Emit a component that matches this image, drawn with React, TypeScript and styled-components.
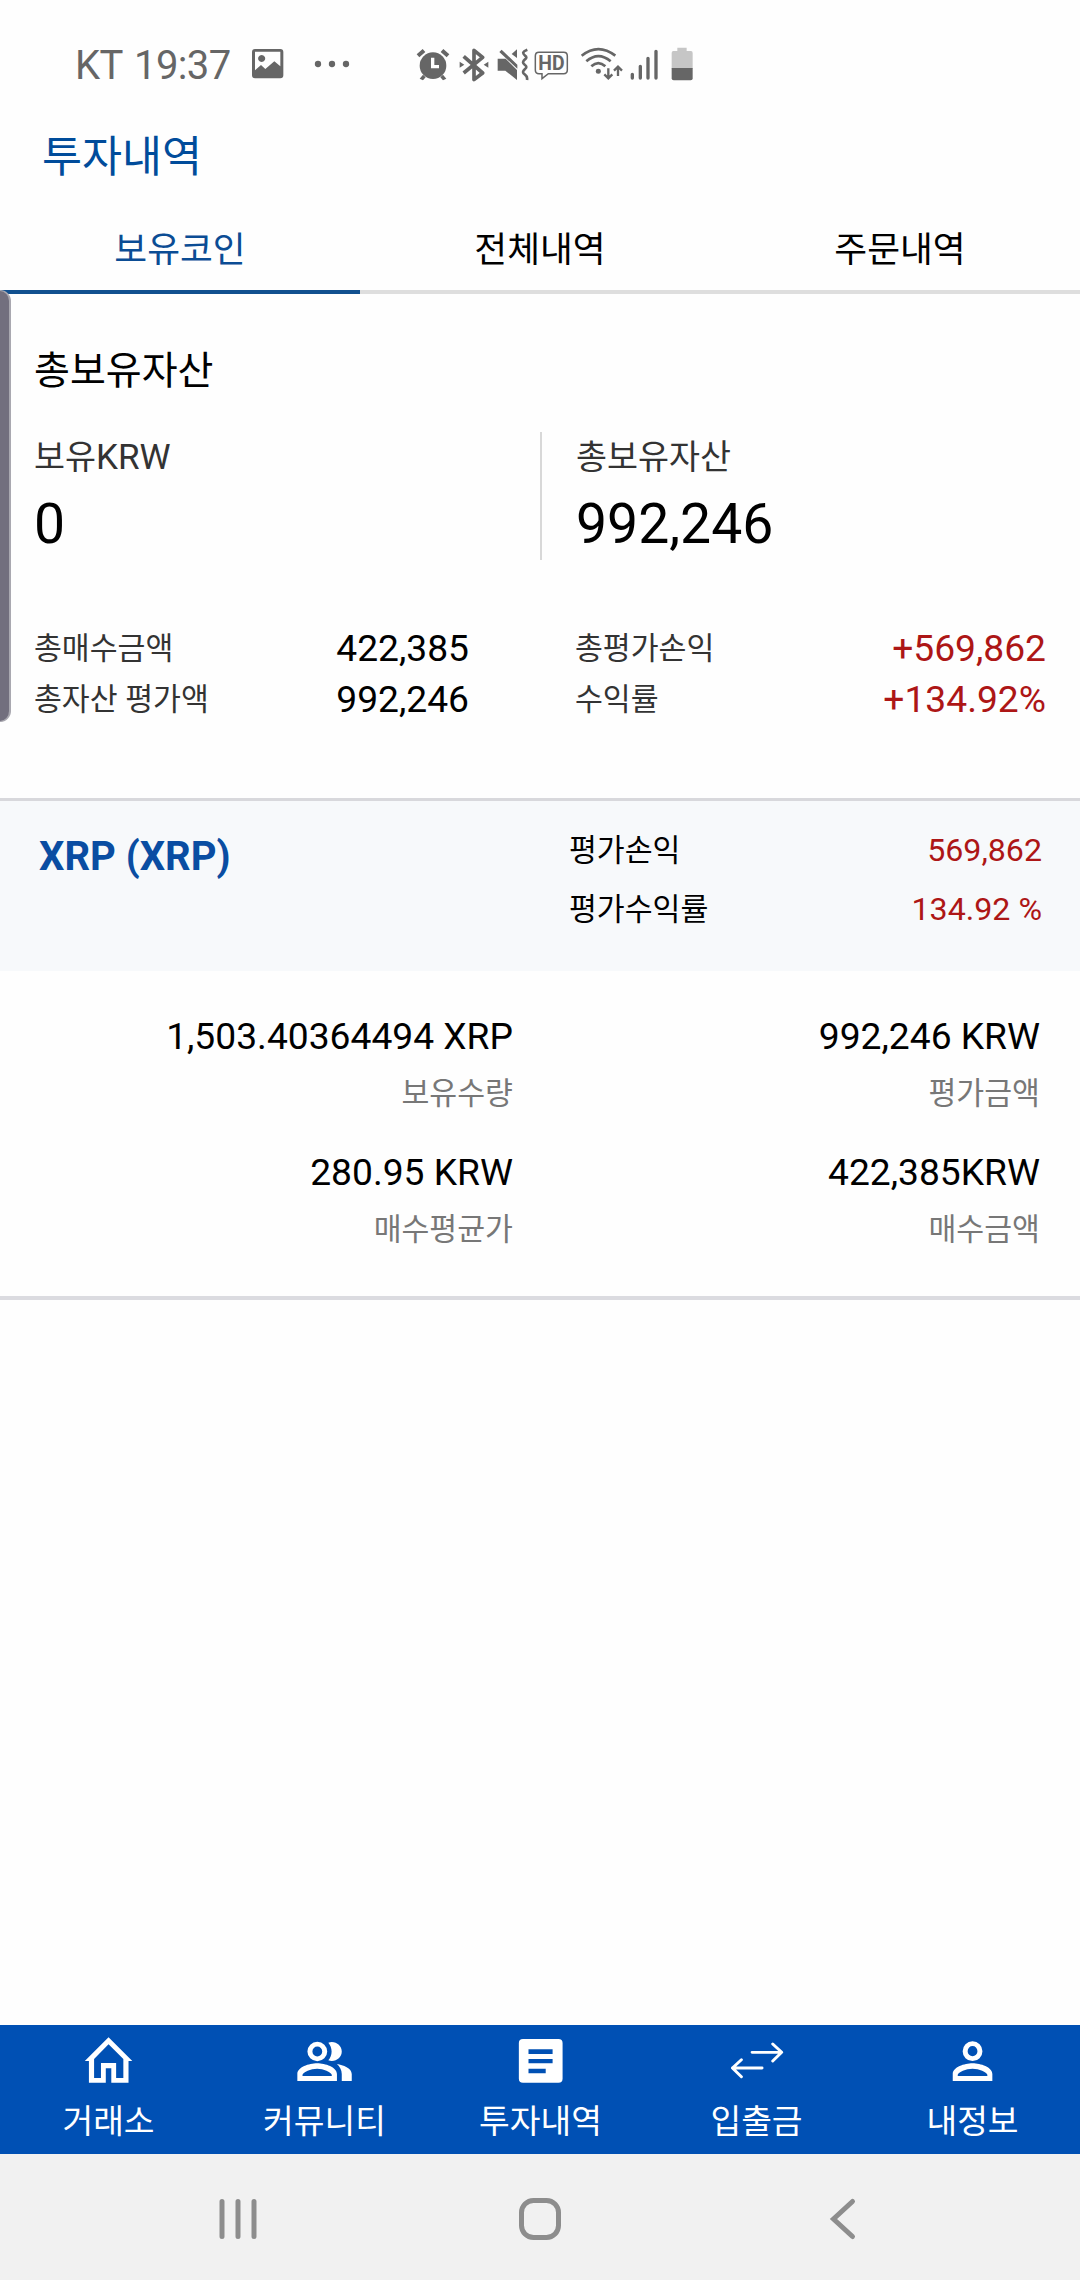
import React from "react";
import styled, { createGlobalStyle } from "styled-components";

const GlobalStyle = createGlobalStyle`
  * { box-sizing: border-box; }
  body {
    margin: 0;
    background: #fefefe;
    font-family: Roboto, "Noto Sans CJK KR", sans-serif;
    color: #000;
  }
`;

const Screen = styled.div`
  position: relative;
  display: flex;
  flex-direction: column;
  width: 1080px;
  height: 2280px;
  background: #fefefe;
  overflow: hidden;
  white-space: nowrap;
`;

const StatusBar = styled.header`
  display: flex;
  align-items: center;
  height: 108px;
  padding: 20px 0 0 75px;
  color: #666;
`;

const StatusText = styled.span<{ $width: number }>`
  width: ${(p) => p.$width}px;
  padding-top: 3px;
  font-size: 40px;
  line-height: 48px;
  letter-spacing: -0.6px;
`;

const StatusIcon = styled.svg<{ $gap: number }>`
  flex: none;
  display: block;
  margin-left: ${(p) => p.$gap}px;
`;

const PageTitle = styled.h1`
  height: 98px;
  margin: 0;
  padding-left: 42px;
  font-size: 43.5px;
  font-weight: 400;
  line-height: 99px;
  color: #004c9b;
`;

const Tabs = styled.nav`
  display: grid;
  grid-template-columns: repeat(3, 1fr);
  height: 88px;
`;

const Tab = styled.div<{ $active?: boolean }>`
  padding-top: 5px;
  border-bottom: 4px solid ${(p) => (p.$active ? "#11508f" : "#dedede")};
  text-align: center;
  font-size: 35.7px;
  line-height: 79px;
  color: ${(p) => (p.$active ? "#0b4c94" : "#000")};
`;

const Main = styled.main`
  flex: 1;
`;

const Summary = styled.section`
  height: 504px;
  padding: 51px 34px 0 34px;
`;

const SectionTitle = styled.h2`
  margin: 0;
  font-size: 39px;
  font-weight: 400;
  line-height: 52px;
`;

const Totals = styled.div`
  display: grid;
  grid-template-columns: 506px 1fr;
  height: 128px;
  margin-top: 35px;
`;

const Total = styled.div<{ $divided?: boolean }>`
  padding: 4px 0 0 ${(p) => (p.$divided ? 34 : 0)}px;
  border-left: ${(p) => (p.$divided ? "2px solid #d8d8d8" : "none")};
`;

const TotalLabel = styled.div`
  height: 44px;
  font-size: 33.7px;
  line-height: 44px;
  color: #333;
`;

const Currency = styled.span`
  font-size: 35px;
`;

const TotalValue = styled.div`
  margin-top: 12px;
  font-size: 55.3px;
  line-height: 66px;
`;

const Stats = styled.div`
  display: grid;
  grid-template-columns: 435px 471px;
  justify-content: space-between;
  margin-top: 63px;
`;

const StatRow = styled.div`
  display: flex;
  align-items: center;
  justify-content: space-between;
  line-height: 51px;
`;

const StatLabel = styled.span`
  font-size: 30.3px;
  color: #333;
`;

const StatValue = styled.span<{ $gain?: boolean }>`
  font-size: 37.2px;
  color: ${(p) => (p.$gain ? "#ad1616" : "#000")};
`;

const HoldingHead = styled.section`
  display: grid;
  grid-template-columns: 530px 1fr;
  height: 173px;
  padding: 20px 38px 0 39px;
  border-top: 3px solid #d8d8dc;
  background: #f7f9fb;
`;

const HoldingName = styled.h3`
  margin: 0;
  padding-top: 6px;
  font-size: 40px;
  font-weight: 700;
  line-height: 59px;
  color: #0a4da2;
`;

const HoldingRow = styled.div`
  display: flex;
  align-items: center;
  justify-content: space-between;
  font-size: 30.3px;
  line-height: 59px;
`;

const HoldingGain = styled.span`
  font-size: 32.2px;
  color: #ad1616;
`;

const Details = styled.section`
  display: grid;
  grid-template-columns: 513px 1fr;
  align-content: start;
  row-gap: 20px;
  height: 329px;
  padding: 36px 40px 0 0;
  border-bottom: 4px solid #dbdbe0;
  text-align: right;
`;

const DetailValue = styled.div`
  font-size: 37.2px;
  line-height: 58px;
`;

const DetailLabel = styled.div`
  font-size: 30.3px;
  line-height: 58px;
  color: #777;
`;

const BottomNav = styled.nav`
  display: grid;
  grid-template-columns: repeat(5, 1fr);
  height: 129px;
  background: #0050b4;
  color: #fff;
`;

const NavItem = styled.div`
  display: flex;
  flex-direction: column;
  align-items: center;
  padding: 10px 0 0 1px;
`;

const NavLabel = styled.span`
  margin-top: 15px;
  font-size: 33.4px;
  line-height: 44px;
`;

const SystemBar = styled.footer`
  display: flex;
  align-items: center;
  height: 126px;
  padding: 3px 0 0 216px;
  background: #f1f1f1;
`;

const SystemIcon = styled.svg<{ $gap?: number }>`
  display: block;
  margin-left: ${(p) => p.$gap ?? 0}px;
`;

const EdgeHandle = styled.div`
  position: absolute;
  left: 0;
  top: 290px;
  width: 11px;
  height: 432px;
  border: solid #a9a8b0;
  border-width: 1px 2px 1px 0;
  border-radius: 0 11px 11px 0;
  background: #726f7e;
`;

type GlyphProps = { x: number; w: number; gap: number; children: React.ReactNode };

const Glyph = ({ x, w, gap, children }: GlyphProps) => (
  <StatusIcon $gap={gap} width={w / 3} height={35} viewBox={`${x} 80 ${w} 105`} fill="currentColor">
    {children}
  </StatusIcon>
);

const StatusIcons = () => (
  <>
    <StatusIcon $gap={0.5} width={32} height={30} viewBox="0 0 96 90" fill="currentColor">
      <path
        fillRule="evenodd"
        d="M9 0H85Q94 0 94 9V79Q94 88 85 88H9Q0 88 0 79V9Q0 0 9 0ZM9 8V64L27 48 40 60 67 37 85 52V8ZM29 18a10.500 10.500 0 1 1-.1 0Z"
      />
    </StatusIcon>
    <StatusIcon $gap={30} width={36} height={8} viewBox="0 0 108 24" fill="currentColor">
      <circle cx="12" cy="12" r="9.500" />
      <circle cx="54" cy="12" r="9.500" />
      <circle cx="96" cy="12" r="9.500" />
    </StatusIcon>
    <Glyph x={48} w={102} gap={66.5}>
      <circle cx="99" cy="136" r="40" />
      <path d="M50 102L68 86l8 9L58 111ZM148 102L130 86l-8 9 18 16ZM69 163l8 8-8 9-10-5ZM129 163l-8 8 8 9 10-5Z" />
      <path d="M98 112V139H117" fill="none" stroke="#fefefe" strokeWidth="10" />
    </Glyph>
    <Glyph x={176} w={90} gap={9}>
      <path d="M190 108L247 158 221 178V90L247 111 190 158" fill="none" stroke="currentColor" strokeWidth="11" strokeLinejoin="round" />
      <path d="M178 124L192 133 178 142ZM264 124L250 133 264 142Z" />
    </Glyph>
    <Glyph x={290} w={96} gap={8}>
      <path d="M292 115H316L350 149V179L315 151H292ZM304 88L351 133V145L297 95ZM350 87V113L334 101Z" />
      <path
        d="M381 88C366 94 366 98 374 106Q382 111 374 117C366 124 366 127 374 134Q382 140 374 146C366 153 366 158 374 163Q382 169 380 179"
        fill="none"
        stroke="currentColor"
        strokeWidth="8"
      />
    </Glyph>
    <Glyph x={402} w={104} gap={5}>
      <path d="M417 96H491Q502 96 502 107V149Q502 160 491 160H445L426 175V160H417Q406 160 406 149V107Q406 96 417 96Z" fill="none" stroke="currentColor" strokeWidth="4.500" />
      <text x="454.500" y="150" fontFamily="Roboto, sans-serif" fontWeight="700" fontSize="60" textAnchor="middle" textLength="79" lengthAdjust="spacingAndGlyphs">
        HD
      </text>
    </Glyph>
    <Glyph x={540} w={128} gap={11.500}>
      <g fill="none" stroke="currentColor" strokeWidth="8">
        <path d="M545 106Q595 66 646 106M559 123Q595 92 632 123M574 138Q595 119 616 138" />
        <path d="M625 144V173M613 162L625 174 637 162M654 167V139M642 151L654 139 666 151" strokeWidth="7" />
      </g>
      <circle cx="595" cy="153" r="7.500" />
    </Glyph>
    <Glyph x={691} w={86} gap={7.500}>
      <path d="M698 162V173M722 138V173M745 114V173M769 93V173" fill="none" stroke="currentColor" strokeWidth="10" strokeLinecap="round" />
    </Glyph>
    <Glyph x={814} w={68} gap={12.500}>
      <path d="M833 82H861V92H874Q879 92 879 98V145H816V98Q816 92 821 92H833Z" fill="#c6c6c6" />
      <path d="M816 143H879V174Q879 180 873 180H822Q816 180 816 174Z" />
    </Glyph>
  </>
);

const NavSvg = ({ children }: { children: React.ReactNode }) => (
  <svg width={55.1} height={50} viewBox="-80 0 160 150" preserveAspectRatio="none" fill="currentColor">
    {children}
  </svg>
);

const icons = {
  home: (
    <path
      fillRule="evenodd"
      d="M0 7L69 78H58V143H8V100H-8V143H-57V78H-69ZM0 28L43 72V129H22V84H-22V129H-42V72Z"
    />
  ),
  people: (
    <>
      <ellipse cx="-21" cy="49.500" rx="21.500" ry="22" fill="none" stroke="currentColor" strokeWidth="14.500" />
      <path fillRule="evenodd" d="M-79 138V117c0-20 34-32 57.500-32S36 97 36 117V138ZM-64 123V119c2-8 24-18 42.500-18s40 10 42.500 18v4Z" />
      <path d="M11 23c3-1 7-2 10-2 16 0 29 13 29 28.500S37 78 21 78c-3 0-7-1-10-2 6-7 9.500-17 9.500-26.500S17 30 11 23ZM36 87c18 3 43 12 43 30v21H50V117c0-12-6-22-14-30Z" />
    </>
  ),
  history: (
    <path
      fillRule="evenodd"
      d="M-51 12H52Q64 12 64 24V131Q64 143 52 143H-51Q-63 143-63 131V24Q-63 12-51 12ZM-35 43V57H35V43ZM-35 72V85H35V72ZM-35 101V115H15V101Z"
    />
  ),
  transfer: (
    <path
      d="M-13 52H73M47 27L73 52 47 78M16 99H-70M-44 74L-70 99-44 125"
      fill="none"
      stroke="currentColor"
      strokeWidth="8.500"
      strokeLinecap="round"
      strokeLinejoin="round"
    />
  ),
  person: (
    <>
      <ellipse cx="0" cy="48.500" rx="21.500" ry="22.500" fill="none" stroke="currentColor" strokeWidth="14.500" />
      <path fillRule="evenodd" d="M-57.500 138V117c0-20 34-32 57.500-32S57.500 97 57.500 117V138ZM-43 123V119c2-8 24-18 43-18s41 10 43 18v4Z" />
    </>
  ),
};

const navItems: { label: string; icon: keyof typeof icons }[] = [
  { label: "거래소", icon: "home" },
  { label: "커뮤니티", icon: "people" },
  { label: "투자내역", icon: "history" },
  { label: "입출금", icon: "transfer" },
  { label: "내정보", icon: "person" },
];

const stats = [
  { label: "총매수금액", value: "422,385" },
  { label: "총평가손익", value: "+569,862", gain: true },
  { label: "총자산 평가액", value: "992,246" },
  { label: "수익률", value: "+134.92%", gain: true },
];

const details = [
  { value: "1,503.40364494 XRP", label: "보유수량" },
  { value: "992,246 KRW", label: "평가금액" },
  { value: "280.95 KRW", label: "매수평균가" },
  { value: "422,385KRW", label: "매수금액" },
];

export default function App() {
  return (
    <Screen>
      <GlobalStyle />
      <StatusBar>
        <StatusText $width={59}>KT</StatusText>
        <StatusText $width={117}>19:37</StatusText>
        <StatusIcons />
      </StatusBar>
      <PageTitle>투자내역</PageTitle>
      <Tabs>
        <Tab $active>보유코인</Tab>
        <Tab>전체내역</Tab>
        <Tab>주문내역</Tab>
      </Tabs>
      <Main>
        <Summary>
          <SectionTitle>총보유자산</SectionTitle>
          <Totals>
            <Total>
              <TotalLabel>
                보유<Currency>KRW</Currency>
              </TotalLabel>
              <TotalValue>0</TotalValue>
            </Total>
            <Total $divided>
              <TotalLabel>총보유자산</TotalLabel>
              <TotalValue>992,246</TotalValue>
            </Total>
          </Totals>
          <Stats>
            {stats.map((s) => (
              <StatRow key={s.label}>
                <StatLabel>{s.label}</StatLabel>
                <StatValue $gain={s.gain}>{s.value}</StatValue>
              </StatRow>
            ))}
          </Stats>
        </Summary>
        <HoldingHead>
          <HoldingName>XRP (XRP)</HoldingName>
          <div>
            <HoldingRow>
              평가손익<HoldingGain>569,862</HoldingGain>
            </HoldingRow>
            <HoldingRow>
              평가수익률<HoldingGain>134.92 %</HoldingGain>
            </HoldingRow>
          </div>
        </HoldingHead>
        <Details>
          {details.map((d) => (
            <div key={d.label}>
              <DetailValue>{d.value}</DetailValue>
              <DetailLabel>{d.label}</DetailLabel>
            </div>
          ))}
        </Details>
      </Main>
      <BottomNav>
        {navItems.map((n) => (
          <NavItem key={n.label}>
            <NavSvg>{icons[n.icon]}</NavSvg>
            <NavLabel>{n.label}</NavLabel>
          </NavItem>
        ))}
      </BottomNav>
      <SystemBar>
        <SystemIcon width={44} height={44} viewBox="0 0 44 44" fill="none" stroke="#8d8d8d" strokeWidth="5" strokeLinecap="round">
          <path d="M6 4.500V39.500M22 4.500V39.500M38 4.500V39.500" />
        </SystemIcon>
        <SystemIcon $gap={258} width={44} height={44} viewBox="0 0 44 44" fill="none" stroke="#8d8d8d" strokeWidth="5">
          <rect x="3.500" y="3.500" width="37" height="37" rx="12" />
        </SystemIcon>
        <SystemIcon $gap={260.5} width={44} height={44} viewBox="0 0 44 44" fill="none" stroke="#8d8d8d" strokeWidth="5" strokeLinecap="round">
          <path d="M29.500 4.500L10.500 22 29.500 39.500" />
        </SystemIcon>
      </SystemBar>
      <EdgeHandle />
    </Screen>
  );
}
